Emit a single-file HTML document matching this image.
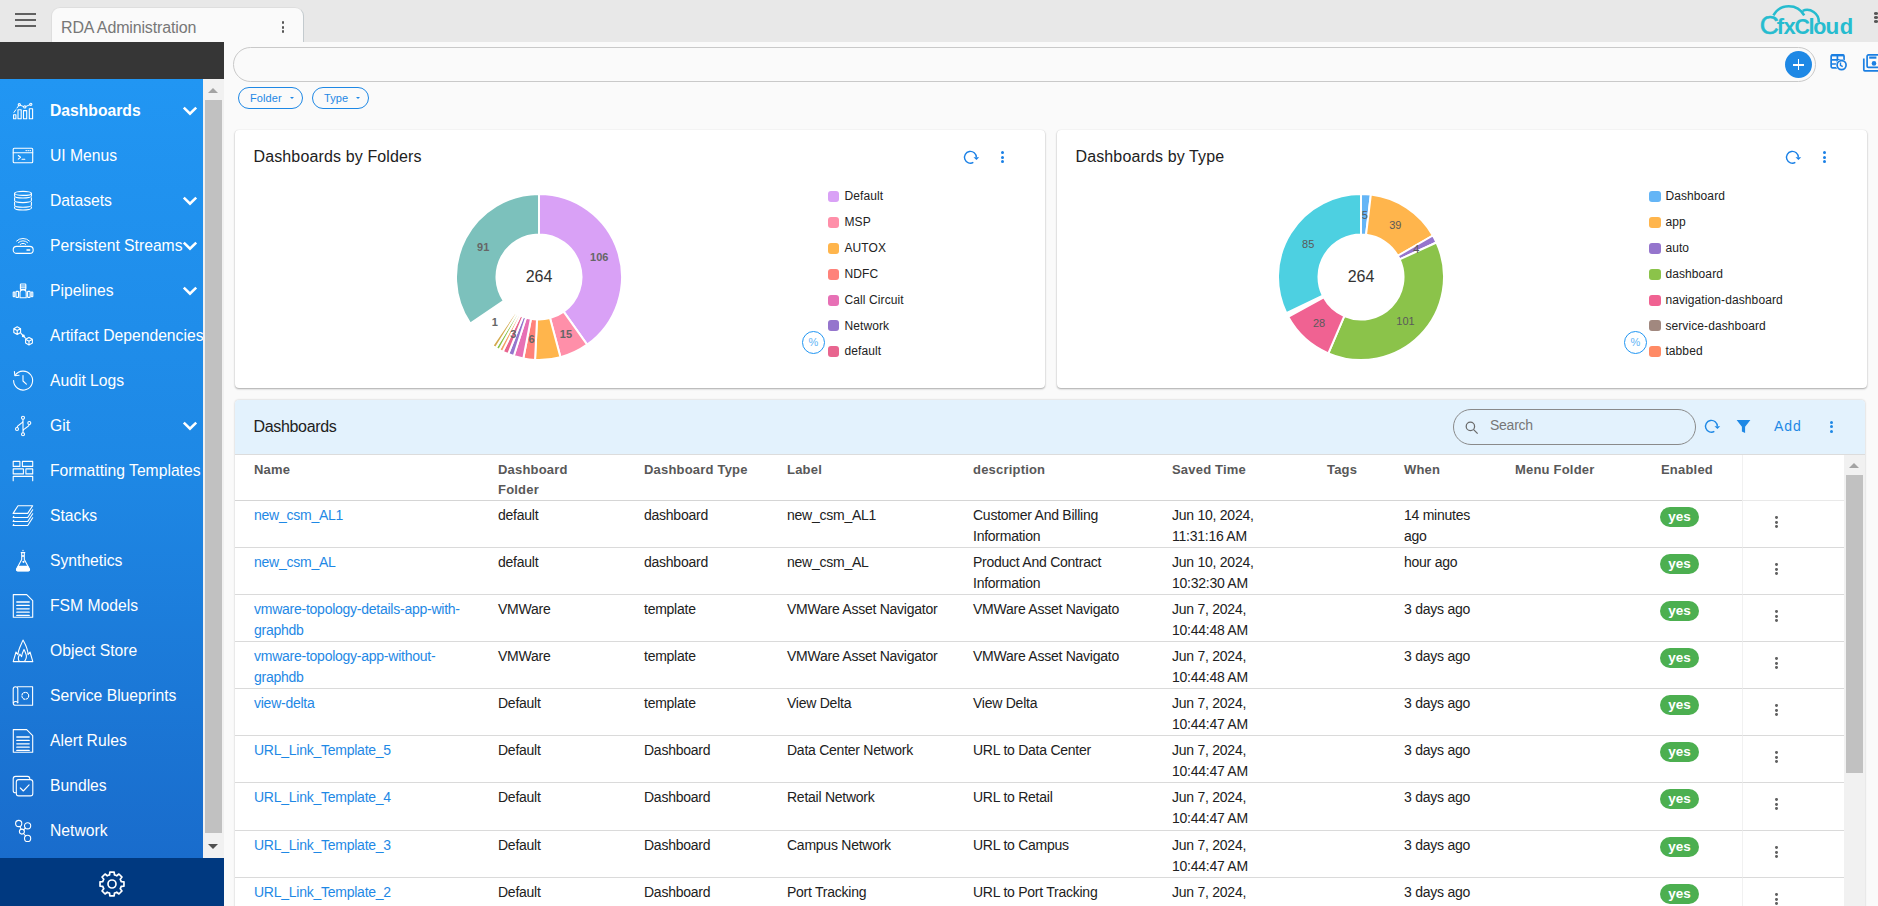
<!DOCTYPE html>
<html lang="en">
<head>
<meta charset="utf-8">
<title>RDA Administration - Dashboards</title>
<style>
*{box-sizing:border-box;margin:0;padding:0}
html,body{width:1878px;height:906px;overflow:hidden}
body{font-family:"Liberation Sans",Arial,sans-serif;background:#fafafa;color:#212121;position:relative;font-size:14px}
.abs{position:absolute}
/* top bar */
#topbar{position:absolute;left:0;top:0;width:1878px;height:42px;background:#e8e8e8}
#burger{position:absolute;left:15px;top:13px;width:21px;height:15px}
#burger i{position:absolute;left:0;width:21px;height:2px;background:#606060}
#tab{position:absolute;left:51px;top:7px;width:253px;height:35px;background:#fafafa;border:1px solid #dedede;border-right-color:#c3cace;border-bottom:none;border-radius:9px 9px 0 0}
#tab span{position:absolute;left:9px;top:10px;font-size:16px;line-height:20px;color:#777;letter-spacing:-0.15px}
.vdots{position:absolute;width:3px}
.vdots i{display:block;width:2.6px;height:2.6px;border-radius:50%;background:#555;margin-bottom:1.4px}
.vdots.t i{width:2.8px;height:2.8px;margin-bottom:1.7px}
.vdots.m i{width:3px;height:3px;margin-bottom:1.6px}
.vdots.l i{width:3px;height:3px;margin-bottom:1.45px}
#logo{position:absolute;left:1755px;top:0;width:104px;height:42px}
/* sidebar */
#darkbar{position:absolute;left:0;top:42px;width:224px;height:37px;background:#363636}
#side{position:absolute;left:0;top:79px;width:203px;height:779px;background:linear-gradient(180deg,#2196f3 0%,#1e88e5 50%,#196ccc 100%);overflow:hidden}
#sidescroll{position:absolute;left:203px;top:79px;width:21px;height:779px;background:#f1f1f1}
#sidescroll .thumb{position:absolute;left:2px;top:21px;width:17px;height:733px;background:#c1c1c1}
.arr{position:absolute;width:0;height:0;border-left:5px solid transparent;border-right:5px solid transparent}
#sidefoot{position:absolute;left:0;top:858px;width:224px;height:48px;background:#003980}
.mi{position:absolute;left:0;width:203px;height:45px;color:#fff;font-size:15.7px;white-space:nowrap}
.mi span{position:absolute;left:50px;top:12px;line-height:20px}
.mi svg.ic{position:absolute;left:11px;top:8px;width:24px;height:24px;overflow:visible;fill:none;stroke:#fff;stroke-width:1.1;stroke-linecap:round;stroke-linejoin:round}
.mi svg.ch{position:absolute;left:182px;top:17px;width:16px;height:10px;fill:none;stroke:#fff;stroke-width:2.6}
.mi.b span{font-weight:bold}
/* search */
#search{position:absolute;left:233px;top:47px;width:1583px;height:35px;border:1px solid #c9c9c9;border-radius:18px;background:#fafafa}
#plus{position:absolute;left:1785px;top:51px;width:27px;height:27px;border-radius:50%;background:#1e88e5}
#plus:before{content:"";position:absolute;left:8px;top:13px;width:11px;height:1.6px;background:#fff}
#plus:after{content:"";position:absolute;left:12.7px;top:8px;width:1.6px;height:11px;background:#fff}
.chip{position:absolute;top:87px;height:22px;border:1px solid #1e88e5;border-radius:11px;color:#1e88e5;font-size:11px;line-height:20px;padding-left:11px;letter-spacing:.1px}
.chip:after{content:"";position:absolute;right:8.5px;top:8.5px;border-left:2.6px solid transparent;border-right:2.6px solid transparent;border-top:2.6px solid #1e88e5}
/* cards */
.card{position:absolute;top:130px;width:810px;height:258px;background:#fff;border-radius:4px;box-shadow:0 1px 2px rgba(0,0,0,.32),0 0 1px rgba(0,0,0,.12)}
.card h3{position:absolute;left:18.5px;top:17px;font-size:16px;line-height:20px;font-weight:normal;color:#212121;letter-spacing:.13px}
.card svg.chart{position:absolute;left:0;top:0;width:810px;height:258px}
.dl{font-size:11px;fill:#666;font-weight:bold;font-family:"Liberation Sans",Arial,sans-serif}
.dl.n{font-weight:normal;fill:#5a5a5a}
.ct{font-size:16px;fill:#333;font-family:"Liberation Sans",Arial,sans-serif}
.lg{position:absolute;left:593px;height:12px;font-size:12px;line-height:12px;color:#222;white-space:nowrap;letter-spacing:.1px}
.lg i{position:absolute;left:0;top:0px;width:11px;height:11px;border-radius:3px}
.lg span{position:absolute;left:16.5px;top:-1px}
.lg.r i{left:-1px;width:12px}
.lg.r span{left:15.4px}
.pct{position:absolute;left:567px;top:201px;width:23px;height:23px;border:1px solid #2196f3;border-radius:50%;color:#64b5f6;font-size:11px;line-height:21px;text-align:center}
.ri{position:absolute;top:19px;width:18px;height:18px}
/* table */
#tcard{position:absolute;left:235px;top:400px;width:1630px;height:520px;background:#fff;border-radius:4px 4px 0 0;box-shadow:0 0 2px rgba(0,0,0,.25)}
#thead{position:absolute;left:0;top:0;width:1630px;height:55px;background:#e3f2fd;border-radius:4px 4px 0 0;border-bottom:1px solid #dcdcdc}
#thead h3{position:absolute;left:18.5px;top:17px;letter-spacing:-.33px;font-size:16px;line-height:20px;font-weight:normal;color:#212121}
#tsearch{position:absolute;left:1218px;top:9px;width:243px;height:36px;border:1px solid #8a8a8a;border-radius:18px;background:#e3f2fd}
#tsearch span{position:absolute;left:36px;top:6px;font-size:14px;letter-spacing:-.25px;line-height:18px;color:#777}
#add{position:absolute;left:1539px;top:17px;font-size:14px;line-height:18px;color:#1e88e5;letter-spacing:.9px}
table{position:absolute;left:0;top:55px;border-collapse:separate;border-spacing:0;table-layout:fixed;width:1609px}
th{font-size:13px;font-weight:bold;color:#585858;text-align:left;vertical-align:top;line-height:20px;padding:4.5px 8px 0 8px;height:46px;border-bottom:1px solid #d5d5d5;letter-spacing:.2px}
td{font-size:14px;letter-spacing:-.25px;line-height:21px;color:#212121;vertical-align:top;padding:4px 8px 0 8px;height:47px;border-bottom:1px solid #dadada;white-space:nowrap}
th:first-child,td:first-child{padding-left:19px}
td a{color:#1e88e5;text-decoration:none}
td.act,th.act{border-left:1px solid #f1f1f1}
th.act{border-bottom-color:#e9e9e9}
.yes{display:inline-block;letter-spacing:0;margin:2px 0 0 -1px;width:39px;height:20px;border-radius:10px;background:#4caf50;color:#fff;font-weight:bold;font-size:13.5px;line-height:19px;text-align:center}
.rd{display:block;margin:11.2px 0 0 24.4px;width:3px}
.rd i{display:block;width:2.8px;height:2.8px;border-radius:50%;background:#606060;margin-bottom:1.8px}
#tscroll{position:absolute;left:1609px;top:55px;width:21px;height:470px;background:#f1f1f1}
#tscroll .thumb{position:absolute;left:2px;top:20px;width:17px;height:298px;background:#c1c1c1}
#rstrip{position:absolute;left:1867px;top:42px;width:11px;height:864px;background:linear-gradient(90deg,#ededed,#f5f5f5)}
</style>
</head>
<body>
<!-- top bar -->
<div id="topbar">
  <div id="burger"><i style="top:0"></i><i style="top:6px"></i><i style="top:12px"></i></div>
  <div id="tab"><span>RDA Administration</span><div class="vdots t" style="left:229.600px;top:13.300px"><i></i><i></i><i></i></div></div>
  <svg id="logo" viewBox="0 0 104 42">
    <path d="M18.400 15.400A17.500 17.500 0 0 1 49.200 15.400" fill="none" stroke="#26bccf" stroke-width="2.500"/>
    <path d="M47.600 10.800A11.800 11.800 0 0 1 63.800 21.900" fill="none" stroke="#26bccf" stroke-width="2.500"/>
    <text y="33.700" font-family="Liberation Sans, Arial, sans-serif" font-size="22" font-weight="bold" fill="#26bccf"><tspan x="4.700" font-size="26.400" font-weight="normal" stroke="#26bccf" stroke-width="0.600">C</tspan><tspan x="21.800">f</tspan><tspan x="28.600">x</tspan><tspan x="39.500" font-size="21.300">C</tspan><tspan x="53.500">l</tspan><tspan x="58.200" font-size="21.500">o</tspan><tspan x="70.600" font-size="22.500">u</tspan><tspan x="84.800">d</tspan></text>
  </svg>
  <div class="vdots" style="left:1874px;top:12px;width:4px"><i style="width:4px"></i><i style="width:4px"></i><i style="width:4px"></i></div>
</div>
<!-- sidebar -->
<div id="darkbar"></div>
<div id="side">
<div class="mi b" style="top:10px"><svg class="ic" viewBox="0 0 24 24"><path d="M2.6 17.8h2.3v4H2.6zM7 12.8h3.2v9H7zM12.5 13.6h3.2v8.200h-3.200zM18.300 11.800h3.300v10h-3.300z"/><path d="M3 15.400l1.800-2.600M6 11l1.800-2.400M9.400 8.300l3.300 1.300M15 9.400l3.700-1.600" stroke-width="1"/><circle cx="8.300" cy="7.700" r="1.100"/><circle cx="13.800" cy="9.900" r="1.100"/><circle cx="19.800" cy="7.300" r="1.100"/></svg><span>Dashboards</span><svg class="ch" viewBox="0 0 16 10"><path d="M1.800 1.600l6.200 6 6.200-6"/></svg></div>
<div class="mi" style="top:55px"><svg class="ic" viewBox="0 0 24 24"><rect x="2.200" y="6.300" width="19.500" height="14.500" rx="1"/><path d="M2.200 10.800h19.500M7.300 13.500l2.200 1.800-2.200 1.800M11 17.300h2.800"/><path d="M15 8.600h.4M17 8.600h.4M19 8.600h.4" stroke-width="1.100"/></svg><span>UI Menus</span></div>
<div class="mi" style="top:100px"><svg class="ic" viewBox="0 0 24 24"><ellipse cx="12" cy="6.400" rx="8.400" ry="2"/><path d="M3.600 6.400v2.600c0 1.100 3.800 2 8.400 2s8.400-.9 8.400-2v-2.600M3.600 10.800v2.800c0 1.100 3.800 2 8.400 2s8.400-.9 8.400-2v-2.800M3.600 15.400v2.800c0 1.100 3.800 2 8.400 2s8.400-.9 8.400-2v-2.800M3.600 20v1c0 1.100 3.800 2 8.400 2s8.400-.9 8.400-2v-1"/></svg><span>Datasets</span><svg class="ch" viewBox="0 0 16 10"><path d="M1.800 1.600l6.200 6 6.200-6"/></svg></div>
<div class="mi" style="top:145px"><svg class="ic" viewBox="0 0 24 24"><rect x="2.200" y="14.400" width="20" height="7" rx="3.500"/><path d="M16 17.900h2.600" stroke-width="1.500"/><path d="M9.200 12.400a4 4 0 0 1 5.600 0M7.400 10.600a6.500 6.500 0 0 1 9.200 0M5.600 9a9 9 0 0 1 12.800 0" stroke-width="1"/></svg><span>Persistent Streams</span><svg class="ch" viewBox="0 0 16 10"><path d="M1.800 1.600l6.200 6 6.200-6"/></svg></div>
<div class="mi" style="top:190px"><svg class="ic" viewBox="0 0 24 24"><rect x="9.400" y="7" width="5.400" height="5.600" rx=".6"/><path d="M9.400 9h5.400M9.400 10.800h5.400" stroke-width="1"/><path d="M9 20.700v-5a3 3 0 0 1 6.200 0v5z"/><rect x="2.200" y="15" width="1.600" height="4.800" rx=".5"/><rect x="5" y="14.400" width="2.500" height="6" rx=".5"/><rect x="16.600" y="14.400" width="2.500" height="6" rx=".5"/><rect x="20.200" y="15" width="1.600" height="4.800" rx=".5"/></svg><span>Pipelines</span><svg class="ch" viewBox="0 0 16 10"><path d="M1.800 1.600l6.200 6 6.200-6"/></svg></div>
<div class="mi" style="top:235px"><svg class="ic" viewBox="0 0 24 24"><path d="M6.200 4.800l3.400 1.900v3.800l-3.400 1.900-3.400-1.900v-3.800zM2.800 6.700l3.400 1.900 3.400-1.900M6.200 8.600v3.800"/><path d="M18 15.400l3.400 1.900v3.800l-3.400 1.900-3.400-1.900v-3.800zM14.600 17.300l3.400 1.900 3.400-1.900M18 19.200v3.800"/><path d="M9.800 11.200l4.600 5"/><circle cx="12.300" cy="13.900" r=".9" fill="#fff"/></svg><span>Artifact Dependencies</span></div>
<div class="mi" style="top:280px"><svg class="ic" viewBox="0 0 24 24"><path d="M4.200 8.300a9.500 9.500 0 1 1-1.600 5.300"/><path d="M3.400 4.600l.5 4.200 4.200-.6"/><path d="M12 8.600v5.400l3.400 3.200"/></svg><span>Audit Logs</span></div>
<div class="mi" style="top:325px"><svg class="ic" viewBox="0 0 24 24"><circle cx="12" cy="5.800" r="1.500"/><circle cx="12" cy="22.200" r="1.500"/><circle cx="18.300" cy="11" r="1.500"/><circle cx="6" cy="17" r="1.500"/><path d="M12 7.300v13.400M18.300 12.500c0 3-6.300 3.500-6.300 6.500M6 15.500c0-3 6-3.500 6-6.500"/></svg><span>Git</span><svg class="ch" viewBox="0 0 16 10"><path d="M1.800 1.600l6.200 6 6.200-6"/></svg></div>
<div class="mi" style="top:370px"><svg class="ic" viewBox="0 0 24 24"><rect x="2.200" y="4.400" width="6.700" height="5"/><rect x="11.400" y="4.400" width="10.300" height="5"/><rect x="2.200" y="11.900" width="10.200" height="5"/><rect x="14.900" y="11.900" width="6.800" height="5"/><path d="M2.200 23.700v-4.300h19.500v4.300"/></svg><span>Formatting Templates</span></div>
<div class="mi" style="top:415px"><svg class="ic" viewBox="0 0 24 24"><path d="M7 3.700h14.700l-5 7.700h-14.600z"/><path d="M2.800 14.300l-.7 1.200h14.600l5-7.700M2.800 18.300l-.7 1.200h14.600l5-7.700M2.800 22.300l-.7 1.200h14.600l5-7.700" /></svg><span>Stacks</span></div>
<div class="mi" style="top:460px"><svg class="ic" viewBox="0 0 24 24"><path d="M10.700 5.800v6.800l-5 9.200c-.6 1.100 0 2.100 1.200 2.100h10.200c1.200 0 1.800-1 1.200-2.100l-5-9.200v-6.800"/><path d="M10.200 5.600h3.600M12 3.300v.4" /><path d="M7.200 19.400h9.600l1.400 2.700c.4.800 0 1.500-.9 1.500h-10.600c-.9 0-1.300-.7-.9-1.500z" fill="#fff"/><circle cx="12" cy="9" r=".5" fill="#fff"/><circle cx="12.500" cy="14.800" r=".6" fill="#fff"/></svg><span>Synthetics</span></div>
<div class="mi" style="top:505px"><svg class="ic" viewBox="0 0 24 24"><path d="M2.300 2.600h13.400l6 6v16.700h-19.400z"/><path d="M5.800 10h12.400M5.800 13.400h12.400M5.800 16.800h12.400M5.800 20.200h12.400M5.800 23.400h12.400" stroke-width="1.300"/></svg><span>FSM Models</span></div>
<div class="mi" style="top:550px"><svg class="ic" viewBox="0 0 24 24"><path d="M2.200 24.600l2.800-9.600 2 2.600c0-5 3-9.600 5-14.500 2.500 4.500 5 8.500 5 14.500l2-2.600 2.800 9.600z"/><path d="M8.200 24.400c-1.500-2.500-1-5 .8-7.200l1.600 2.400c.3-2.800 1.300-5 2.400-7.200 1.200 3 2.800 5 2.400 7.600-.2 1.700-.8 3-1.800 4.400"/></svg><span>Object Store</span></div>
<div class="mi" style="top:595px"><svg class="ic" viewBox="0 0 24 24"><path d="M6.600 4.700h15v18.600h-16.800c-1.600 0-2.600-1-2.600-2.400v-13.800c0-1.400 1-2.400 2.300-2.400s2.300 1 2.300 2.400v13.600"/><path d="M2.400 20.600c1.400-1.600 3.400-1.400 4.400 0"/><circle cx="14.300" cy="13.800" r="3.400" stroke-dasharray="1.500 1.300"/></svg><span>Service Blueprints</span></div>
<div class="mi" style="top:640px"><svg class="ic" viewBox="0 0 24 24"><path d="M2.300 2.600h13.400l6 6v16.700h-19.400z"/><path d="M5.800 10h12.400M5.800 13.400h12.400M5.800 16.800h12.400M5.800 20.200h12.400M5.800 23.400h12.400" stroke-width="1.300"/></svg><span>Alert Rules</span></div>
<div class="mi" style="top:685px"><svg class="ic" viewBox="0 0 24 24"><path d="M5.300 20.800h-.7c-1.400 0-2.400-1-2.400-2.400v-11.600c0-1.400 1-2.400 2.400-2.400h11.800c1.400 0 2.400 1 2.400 2.400v.6"/><rect x="5.300" y="7.600" width="16.500" height="16.300" rx="2.400"/><path d="M9.300 16l3 3 5.800-6.200"/></svg><span>Bundles</span></div>
<div class="mi" style="top:730px"><svg class="ic" viewBox="0 0 24 24"><circle cx="7.700" cy="6.500" r="3.100"/><circle cx="16.600" cy="8.800" r="3.100"/><circle cx="10.900" cy="14.600" r="2.500"/><circle cx="16.600" cy="21.400" r="3.100"/><path d="M8.900 9.400l1.200 2.800M14.500 11l-1.900 1.800M12.500 16.500l2.100 2.500"/></svg><span>Network</span></div>
</div>
<div id="sidescroll"><div class="arr" style="left:5px;top:9px;border-bottom:5px solid #a3a3a3"></div><div class="thumb"></div><div class="arr" style="left:5px;top:765px;border-top:5px solid #505050"></div></div>
<div id="sidefoot">
  <svg class="abs" style="left:98px;top:12px" width="28" height="28" viewBox="0 0 28 28" fill="none" stroke="#fff" stroke-width="1.7" stroke-linejoin="round"><path d="M11.54 4.82L11.85 2.04L16.15 2.04L16.46 4.82A9.5 9.5 0 0 1 18.75 5.77L20.93 4.02L23.98 7.07L22.23 9.25A9.5 9.5 0 0 1 23.18 11.54L25.96 11.85L25.96 16.15L23.18 16.46A9.5 9.5 0 0 1 22.23 18.75L23.98 20.93L20.93 23.98L18.75 22.23A9.5 9.5 0 0 1 16.46 23.18L16.15 25.96L11.85 25.96L11.54 23.18A9.5 9.5 0 0 1 9.25 22.23L7.07 23.98L4.02 20.93L5.77 18.75A9.5 9.5 0 0 1 4.82 16.46L2.04 16.15L2.04 11.85L4.82 11.54A9.5 9.5 0 0 1 5.77 9.25L4.02 7.07L7.07 4.02L9.25 5.77A9.5 9.5 0 0 1 11.54 4.82Z"/><circle cx="14" cy="14" r="4"/></svg>
</div>
<!-- search -->
<div id="search"></div>
<div id="plus"></div>
<svg class="abs" style="left:1829px;top:53px" width="20" height="20" viewBox="0 0 20 20" fill="none" stroke="#1b7fe2" stroke-width="1.700">
  <rect x="2.150" y="1.950" width="12.900" height="12.900" rx="1.300"/><path d="M2.150 2.450h12.900" stroke-width="1.900"/><path d="M2.150 6.900h12.900M2.150 11h7M8.400 2v12.800"/><circle cx="12.600" cy="12.100" r="5.200" fill="#fafafa" stroke="#fafafa" stroke-width="1.400"/><circle cx="12.600" cy="12.100" r="4.500"/><path d="M11.500 9.600v2.700l2.200 1.300" stroke-width="1.400"/>
</svg>
<svg class="abs" style="left:1862px;top:53px" width="16" height="20" viewBox="0 0 16 20" fill="none" stroke="#1b7fe2" stroke-width="1.700">
  <path d="M1.800 5.400v11.400c0 .6.400 1 1 1h13.200"/><rect x="5.100" y="1.950" width="14" height="12.500" rx="1.300"/><path d="M7.200 4.600h7.200" stroke-width="2.200"/><circle cx="12" cy="10.400" r="2.300" fill="#1b7fe2" stroke="none"/>
</svg>
<div class="chip" style="left:238px;width:65px">Folder</div>
<div class="chip" style="left:312px;width:57px">Type</div>
<!-- cards -->
<div class="card" style="left:235px">
  <h3>Dashboards by Folders</h3>
  <svg class="ri" style="left:727px" viewBox="0 0 18 18" fill="none" stroke="#1a80e6" stroke-width="1.4"><path d="M11.350 13.400A5.900 5.900 0 1 1 14.300 8.300"/><path d="M11.500 8.200h5.700l-2.750 2.900z" fill="#1a80e6" stroke="none"/></svg>
  <div class="vdots m" style="left:765.900px;top:21.100px"><i style="background:#1a80e6"></i><i style="background:#1a80e6"></i><i style="background:#1a80e6"></i></div>
  <svg class="chart" viewBox="0 0 810 258">
<path d="M304.00 64.00A83 83 0 0 1 352.14 214.61L328.65 181.62A42.5 42.5 0 0 0 304.00 104.50Z" fill="#d9a1f6" stroke="#fff" stroke-width="2" stroke-linejoin="round"/>
<path d="M352.14 214.61A83 83 0 0 1 325.48 227.17L315.00 188.05A42.5 42.5 0 0 0 328.65 181.62Z" fill="#ff8fa9" stroke="#fff" stroke-width="2" stroke-linejoin="round"/>
<path d="M325.48 227.17A83 83 0 0 1 300.05 229.91L301.98 189.45A42.5 42.5 0 0 0 315.00 188.05Z" fill="#ffb54c" stroke="#fff" stroke-width="2" stroke-linejoin="round"/>
<path d="M300.05 229.91A83 83 0 0 1 288.29 228.50L295.96 188.73A42.5 42.5 0 0 0 301.98 189.45Z" fill="#ff827a" stroke="#fff" stroke-width="2" stroke-linejoin="round"/>
<path d="M288.29 228.50A83 83 0 0 1 278.73 226.06L291.06 187.48A42.5 42.5 0 0 0 295.96 188.73Z" fill="#e770b5" stroke="#fff" stroke-width="2" stroke-linejoin="round"/>
<path d="M278.73 226.06A83 83 0 0 1 273.15 224.05L288.20 186.46A42.5 42.5 0 0 0 291.06 187.48Z" fill="#9575cd" stroke="#fff" stroke-width="2" stroke-linejoin="round"/>
<path d="M273.15 224.05A83 83 0 0 1 267.73 221.66L285.43 185.23A42.5 42.5 0 0 0 288.20 186.46Z" fill="#e8658f" stroke="#fff" stroke-width="2" stroke-linejoin="round"/>
<path d="M267.73 221.66A83 83 0 0 1 264.22 219.85L283.63 184.30A42.5 42.5 0 0 0 285.43 185.23Z" fill="#f4a268" stroke="#fff" stroke-width="2" stroke-linejoin="round"/>
<path d="M264.22 219.85A83 83 0 0 1 260.80 217.87L281.88 183.29A42.5 42.5 0 0 0 283.63 184.30Z" fill="#8bc34a" stroke="#fff" stroke-width="2" stroke-linejoin="round"/>
<path d="M260.80 217.87A83 83 0 0 1 257.48 215.74L280.18 182.20A42.5 42.5 0 0 0 281.88 183.29Z" fill="#d4a94c" stroke="#fff" stroke-width="2" stroke-linejoin="round"/>
<path d="M235.26 193.52A83 83 0 0 1 304.00 64.00L304.00 104.50A42.5 42.5 0 0 0 268.80 170.82Z" fill="#7cc1bc" stroke="#fff" stroke-width="2" stroke-linejoin="round"/>
<text x="364.2" y="131.4" text-anchor="middle" class="dl">106</text>
<text x="330.9" y="207.8" text-anchor="middle" class="dl">15</text>
<text x="296.5" y="213.4" text-anchor="middle" class="dl">6</text>
<text x="278.4" y="208.4" text-anchor="middle" class="dl">3</text>
<text x="259.8" y="195.8" text-anchor="middle" class="dl">1</text>
<text x="248.2" y="121.0" text-anchor="middle" class="dl">91</text>
  <text x="304" y="151.7" text-anchor="middle" class="ct">264</text>
  </svg>
  <div class="lg" style="top:61px"><i style="background:#d9a1f6"></i><span>Default</span></div>
  <div class="lg" style="top:87px"><i style="background:#ff8fa9"></i><span>MSP</span></div>
  <div class="lg" style="top:113px"><i style="background:#ffb54c"></i><span>AUTOX</span></div>
  <div class="lg" style="top:139px"><i style="background:#ff827a"></i><span>NDFC</span></div>
  <div class="lg" style="top:165px"><i style="background:#e770b5"></i><span>Call Circuit</span></div>
  <div class="lg" style="top:190px"><i style="background:#9575cd"></i><span style="top:0">Network</span></div>
  <div class="lg" style="top:216px"><i style="background:#e8658f"></i><span>default</span></div>
  <div class="pct">%</div>
</div>
<div class="card" style="left:1057px">
  <h3>Dashboards by Type</h3>
  <svg class="ri" style="left:727px" viewBox="0 0 18 18" fill="none" stroke="#1a80e6" stroke-width="1.4"><path d="M11.350 13.400A5.900 5.900 0 1 1 14.300 8.300"/><path d="M11.500 8.200h5.700l-2.750 2.900z" fill="#1a80e6" stroke="none"/></svg>
  <div class="vdots m" style="left:765.900px;top:21.100px"><i style="background:#1a80e6"></i><i style="background:#1a80e6"></i><i style="background:#1a80e6"></i></div>
  <svg class="chart" viewBox="0 0 810 258">
<path d="M304.00 64.00A83 83 0 0 1 313.85 64.59L309.05 104.80A42.5 42.5 0 0 0 304.00 104.50Z" fill="#64b5f6" stroke="#fff" stroke-width="2" stroke-linejoin="round"/>
<path d="M313.85 64.59A83 83 0 0 1 375.88 105.50L340.81 125.75A42.5 42.5 0 0 0 309.05 104.80Z" fill="#ffb54c" stroke="#fff" stroke-width="2" stroke-linejoin="round"/>
<path d="M375.88 105.50A83 83 0 0 1 379.50 112.52L342.66 129.34A42.5 42.5 0 0 0 340.81 125.75Z" fill="#9575cd" stroke="#fff" stroke-width="2" stroke-linejoin="round"/>
<path d="M379.50 112.52A83 83 0 0 1 271.33 223.30L287.27 186.07A42.5 42.5 0 0 0 342.66 129.34Z" fill="#8bc34a" stroke="#fff" stroke-width="2" stroke-linejoin="round"/>
<path d="M271.33 223.30A83 83 0 0 1 231.15 186.78L266.70 167.37A42.5 42.5 0 0 0 287.27 186.07Z" fill="#f06292" stroke="#fff" stroke-width="2" stroke-linejoin="round"/>
<path d="M229.34 183.27A83 83 0 0 1 304.00 64.00L304.00 104.50A42.5 42.5 0 0 0 265.77 165.57Z" fill="#4dd0e1" stroke="#fff" stroke-width="2" stroke-linejoin="round"/>
<text x="307.7" y="88.9" text-anchor="middle" class="dl n">5</text>
<text x="338.3" y="99.0" text-anchor="middle" class="dl n">39</text>
<text x="359.3" y="122.5" text-anchor="middle" class="dl n">4</text>
<text x="348.5" y="194.5" text-anchor="middle" class="dl n">101</text>
<text x="262.1" y="197.1" text-anchor="middle" class="dl n">28</text>
<text x="251.2" y="118.0" text-anchor="middle" class="dl n">85</text>
  <text x="304" y="151.7" text-anchor="middle" class="ct">264</text>
  </svg>
  <div class="lg r" style="top:61px"><i style="background:#64b5f6"></i><span>Dashboard</span></div>
  <div class="lg r" style="top:87px"><i style="background:#ffb54c"></i><span>app</span></div>
  <div class="lg r" style="top:113px"><i style="background:#9575cd"></i><span>auto</span></div>
  <div class="lg r" style="top:139px"><i style="background:#8bc34a"></i><span>dashboard</span></div>
  <div class="lg r" style="top:165px"><i style="background:#f06292"></i><span>navigation-dashboard</span></div>
  <div class="lg r" style="top:190px"><i style="background:#a1887f"></i><span style="top:0">service-dashboard</span></div>
  <div class="lg r" style="top:216px"><i style="background:#ff8a65"></i><span>tabbed</span></div>
  <div class="pct">%</div>
</div>
<!-- table -->
<div id="tcard">
  <div id="thead">
    <h3>Dashboards</h3>
    <div id="tsearch">
      <svg class="abs" style="left:10px;top:10px" width="16" height="16" viewBox="0 0 16 16" fill="none" stroke="#6a6a6a" stroke-width="1.25"><circle cx="6.4" cy="6.4" r="4.2"/><path d="M9.6 9.6l4 4"/></svg>
      <span>Search</span>
    </div>
    <svg class="abs" style="left:1468px;top:18px" width="18" height="18" viewBox="0 0 18 18" fill="none" stroke="#1e88e5" stroke-width="1.4"><path d="M11.350 13.400A5.900 5.900 0 1 1 14.300 8.300"/><path d="M11.500 8.200h5.700l-2.750 2.900z" fill="#1e88e5" stroke="none"/></svg>
    <svg class="abs" style="left:1501px;top:19px" width="15" height="16" viewBox="0 0 15 16" fill="#1e88e5"><path d="M0.6 1h13.8l-5.3 6.8v6.2l-3.2-1.500v-4.700z"/></svg>
    <div id="add">Add</div>
    <div class="vdots l" style="left:1595.4px;top:21px"><i style="background:#1e88e5"></i><i style="background:#1e88e5"></i><i style="background:#1e88e5"></i></div>
  </div>
  <table>
  <colgroup><col style="width:255px"><col style="width:146px"><col style="width:143px"><col style="width:186px"><col style="width:199px"><col style="width:155px"><col style="width:77px"><col style="width:111px"><col style="width:146px"><col style="width:89px"><col style="width:102px"></colgroup>
  <tr><th>Name</th><th>Dashboard<br>Folder</th><th>Dashboard Type</th><th>Label</th><th>description</th><th>Saved Time</th><th>Tags</th><th>When</th><th>Menu Folder</th><th>Enabled</th><th class="act"></th></tr>
  <tr><td><a>new_csm_AL1</a></td><td>default</td><td>dashboard</td><td>new_csm_AL1</td><td>Customer And Billing<br>Information</td><td>Jun 10, 2024,<br>11:31:16 AM</td><td></td><td>14 minutes<br>ago</td><td></td><td><span class="yes">yes</span></td><td class="act"><span class="rd"><i></i><i></i><i></i></span></td></tr>
  <tr><td><a>new_csm_AL</a></td><td>default</td><td>dashboard</td><td>new_csm_AL</td><td>Product And Contract<br>Information</td><td>Jun 10, 2024,<br>10:32:30 AM</td><td></td><td>hour ago</td><td></td><td><span class="yes">yes</span></td><td class="act"><span class="rd"><i></i><i></i><i></i></span></td></tr>
  <tr><td><a>vmware-topology-details-app-with-<br>graphdb</a></td><td>VMWare</td><td>template</td><td>VMWare Asset Navigator</td><td>VMWare Asset Navigato</td><td>Jun 7, 2024,<br>10:44:48 AM</td><td></td><td>3 days ago</td><td></td><td><span class="yes">yes</span></td><td class="act"><span class="rd"><i></i><i></i><i></i></span></td></tr>
  <tr><td><a>vmware-topology-app-without-<br>graphdb</a></td><td>VMWare</td><td>template</td><td>VMWare Asset Navigator</td><td>VMWare Asset Navigato</td><td>Jun 7, 2024,<br>10:44:48 AM</td><td></td><td>3 days ago</td><td></td><td><span class="yes">yes</span></td><td class="act"><span class="rd"><i></i><i></i><i></i></span></td></tr>
  <tr><td><a>view-delta</a></td><td>Default</td><td>template</td><td>View Delta</td><td>View Delta</td><td>Jun 7, 2024,<br>10:44:47 AM</td><td></td><td>3 days ago</td><td></td><td><span class="yes">yes</span></td><td class="act"><span class="rd"><i></i><i></i><i></i></span></td></tr>
  <tr><td><a>URL_Link_Template_5</a></td><td>Default</td><td>Dashboard</td><td>Data Center Network</td><td>URL to Data Center</td><td>Jun 7, 2024,<br>10:44:47 AM</td><td></td><td>3 days ago</td><td></td><td><span class="yes">yes</span></td><td class="act"><span class="rd"><i></i><i></i><i></i></span></td></tr>
  <tr style="height:48px"><td><a>URL_Link_Template_4</a></td><td>Default</td><td>Dashboard</td><td>Retail Network</td><td>URL to Retail</td><td>Jun 7, 2024,<br>10:44:47 AM</td><td></td><td>3 days ago</td><td></td><td><span class="yes">yes</span></td><td class="act"><span class="rd"><i></i><i></i><i></i></span></td></tr>
  <tr><td><a>URL_Link_Template_3</a></td><td>Default</td><td>Dashboard</td><td>Campus Network</td><td>URL to Campus</td><td>Jun 7, 2024,<br>10:44:47 AM</td><td></td><td>3 days ago</td><td></td><td><span class="yes">yes</span></td><td class="act"><span class="rd"><i></i><i></i><i></i></span></td></tr>
  <tr><td><a>URL_Link_Template_2</a></td><td>Default</td><td>Dashboard</td><td>Port Tracking</td><td>URL to Port Tracking</td><td>Jun 7, 2024,<br>10:44:47 AM</td><td></td><td>3 days ago</td><td></td><td><span class="yes">yes</span></td><td class="act"><span class="rd"><i></i><i></i><i></i></span></td></tr>
  </table>
  <div id="tscroll"><div class="arr" style="left:5px;top:8px;border-bottom:5px solid #a3a3a3"></div><div class="thumb"></div></div>
</div>
</body>
</html>
